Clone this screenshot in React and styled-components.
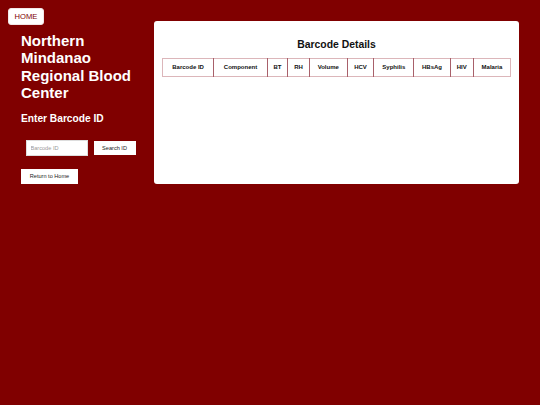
import styled, { createGlobalStyle } from "styled-components";

const GlobalStyle = createGlobalStyle`
  html, body {
    margin: 0;
    padding: 0;
    background-color: #800000;
    font-family: "Liberation Sans", Arial, sans-serif;
  }
`;

const Page = styled.div`
  position: relative;
  min-height: 405px;
  background-color: #800000;
`;

const HomeButton = styled.button`
  position: absolute;
  top: 8px;
  left: 8px;
  width: 36px;
  height: 17px;
  padding: 0;
  background: white;
  color: #800000;
  border: 1px solid #f2e6e6;
  border-radius: 3px;
  font-family: inherit;
  font-size: 7.6px;
  cursor: pointer;
`;

const Layout = styled.div`
  display: flex;
  align-items: flex-start;
  gap: 13px;
  padding: 21px 21px 0 21px;
`;

const Sidebar = styled.div`
  width: 120px;
  padding-top: 11px;
  display: flex;
  flex-direction: column;
  align-items: flex-start;
`;

const Title = styled.h1`
  margin: 0;
  color: white;
  font-size: 15px;
  font-weight: bold;
  line-height: 17.25px;
`;

const Subtitle = styled.h3`
  margin: 12px 0 0 0;
  color: white;
  font-size: 10.2px;
  font-weight: bold;
  line-height: 12px;
`;

const SearchForm = styled.form`
  display: flex;
  align-items: center;
  gap: 6px;
  margin: 15px 0 0 4.5px;
`;

const Input = styled.input`
  box-sizing: border-box;
  width: 62px;
  height: 16px;
  padding: 0 4px;
  border: 1px solid #ddd;
  background: white;
  font-family: inherit;
  font-size: 5.6px;

  &::placeholder {
    color: #9a9a9a;
  }

  &:focus {
    outline: none;
  }
`;

const Button = styled.button`
  box-sizing: border-box;
  width: ${(p) => p.width}px;
  height: 14.5px;
  padding: 0;
  background: white;
  color: #222;
  border: none;
  font-family: inherit;
  font-size: 5.6px;
  cursor: pointer;
`;

const ReturnButton = styled(Button)`
  margin-top: 13px;
`;

const Panel = styled.div`
  flex: 1;
  box-sizing: border-box;
  height: 163px;
  padding: 18px 8px;
  background: white;
  border-radius: 3px;
`;

const PanelTitle = styled.h2`
  margin: 0 0 7px 0;
  text-align: center;
  color: #111;
  font-size: 10.4px;
  font-weight: bold;
  line-height: 12px;
`;

const Table = styled.table`
  width: 100%;
  border-collapse: collapse;
  border: 1px solid #dcb6ba;
`;

const Th = styled.th`
  padding: 5px 3.5px;
  border-left: 1px solid #a8606a;
  color: #111;
  font-size: 6px;
  font-weight: bold;
  line-height: 6.7px;
  white-space: nowrap;

  &:first-child {
    border-left: 1px solid #dcb6ba;
  }
`;

const columns = [
  "Barcode ID",
  "Component",
  "BT",
  "RH",
  "Volume",
  "HCV",
  "Syphilis",
  "HBsAg",
  "HIV",
  "Malaria",
];

const App = () => {
  return (
    <Page>
      <GlobalStyle />
      <HomeButton>HOME</HomeButton>
      <Layout>
        <Sidebar>
          <Title>Northern Mindanao Regional Blood Center</Title>
          <Subtitle>Enter Barcode ID</Subtitle>
          <SearchForm onSubmit={(e) => e.preventDefault()}>
            <Input placeholder="Barcode ID" />
            <Button width={42}>Search ID</Button>
          </SearchForm>
          <ReturnButton width={57}>Return to Home</ReturnButton>
        </Sidebar>
        <Panel>
          <PanelTitle>Barcode Details</PanelTitle>
          <Table>
            <thead>
              <tr>
                {columns.map((c) => (
                  <Th key={c}>{c}</Th>
                ))}
              </tr>
            </thead>
            <tbody></tbody>
          </Table>
        </Panel>
      </Layout>
    </Page>
  );
};

export default App;
